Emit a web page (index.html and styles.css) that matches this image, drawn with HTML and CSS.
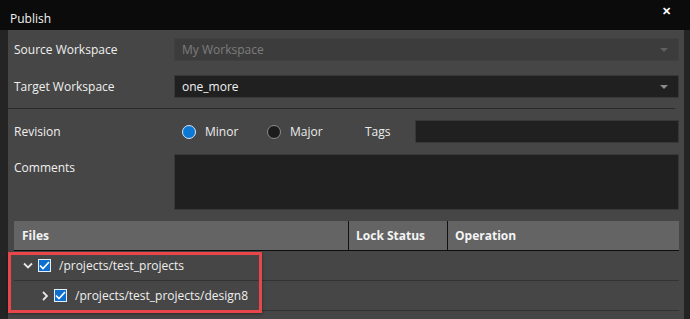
FILE: index.html
```html
<!DOCTYPE html>
<html lang="en">
<head>
    <meta charset="UTF-8">
    <title>Publish</title>
    <link rel="stylesheet" href="styles.css">
</head>
<body>
    <div class="dialog">
        <div class="titlebar">
            <span class="title">Publish</span>
            <span class="close">&#x2715;</span>
        </div>

        <div class="panel">
            <div class="form-row first">
                <label>Source Workspace</label>
                <div class="select disabled">
                    <span>My Workspace</span>
                    <span class="arrow"></span>
                </div>
            </div>

            <div class="form-row">
                <label>Target Workspace</label>
                <div class="select">
                    <span>one_more</span>
                    <span class="arrow"></span>
                </div>
            </div>

            <div class="divider"></div>

            <div class="form-row">
                <label>Revision</label>
                <div class="revision">
                    <span class="radio checked"></span>
                    <span class="radio-label">Minor</span>
                    <span class="radio"></span>
                    <span class="radio-label wide">Major</span>
                    <span class="tags-label">Tags</span>
                    <div class="input"></div>
                </div>
            </div>

            <div class="form-row comments">
                <label>Comments</label>
                <div class="textarea"></div>
            </div>

            <div class="table">
                <div class="thead">
                    <div class="th">Files</div>
                    <div class="th">Lock Status</div>
                    <div class="th">Operation</div>
                </div>
                <div class="tbody">
                    <div class="tr">
                        <div class="td file">
                            <svg class="chevron" width="10" height="7" viewBox="0 0 10 7"><path d="M1 1.5 L5 5.5 L9 1.5" fill="none" stroke="#e6e6e6" stroke-width="1.8"/></svg>
                            <span class="checkbox"><svg width="11" height="9" viewBox="0 0 11 9"><path d="M1 4.5 L4 7.5 L10 1" fill="none" stroke="#fff" stroke-width="1.6"/></svg></span>
                            <span>/projects/test_projects</span>
                        </div>
                        <div class="td"></div>
                        <div class="td"></div>
                    </div>
                    <div class="tr">
                        <div class="td file child">
                            <svg class="chevron" width="6" height="10" viewBox="0 0 6 10"><path d="M1 1 L5 5 L1 9" fill="none" stroke="#e6e6e6" stroke-width="1.8"/></svg>
                            <span class="checkbox"><svg width="11" height="9" viewBox="0 0 11 9"><path d="M1 4.5 L4 7.5 L10 1" fill="none" stroke="#fff" stroke-width="1.6"/></svg></span>
                            <span>/projects/test_projects/design8</span>
                        </div>
                        <div class="td"></div>
                        <div class="td"></div>
                    </div>
                    <div class="tr"></div>
                    <div class="highlight"></div>
                </div>
            </div>
        </div>
    </div>
</body>
</html>
```

FILE: styles.css
```css
body {
    margin: 0;
    background-color: #242424;
    font-family: "Open Sans", "Noto Sans", sans-serif;
    font-size: 12px;
    color: #ececec;
}
.dialog {
    width: 690px;
    height: 319px;
    overflow: hidden;
    display: flex;
    flex-direction: column;
}
.titlebar {
    height: 30px;
    flex-shrink: 0;
    background-color: #0b0b0b;
    display: flex;
    align-items: center;
    justify-content: space-between;
    padding: 0 19px 0 10px;
}
.title {
    margin-top: 6px;
    font-size: 12px;
    color: #f2f2f2;
}
.close {
    margin-top: -10px;
    font-size: 11px;
    font-weight: bold;
    color: #fff;
}
.panel {
    flex: 1;
    margin: 0 6px 0 8px;
    padding: 8px 5px 0 6px;
    background-color: #464646;
    display: flex;
    flex-direction: column;
}
.form-row {
    display: grid;
    grid-template-columns: 160px 1fr;
    align-items: center;
    margin-top: 14px;
}
.form-row.first {
    margin-top: 0;
}
.form-row label {
    color: #f0f0f0;
}
.select {
    height: 23px;
    box-sizing: border-box;
    background-color: #202020;
    border: 1px solid #383838;
    display: flex;
    align-items: center;
    justify-content: space-between;
    padding: 0 10px 0 7px;
    color: #f2f2f2;
}
.select.disabled {
    background-color: #3c3c3c;
    border-color: #404040;
    color: #7c7c7c;
}
.arrow {
    width: 0;
    height: 0;
    border-left: 4px solid transparent;
    border-right: 4px solid transparent;
    border-top: 4px solid #8a8a8a;
}
.select.disabled .arrow {
    border-top-color: #5e5e5e;
}
.divider {
    height: 1px;
    background-color: #2a2a2a;
    margin: 10px 4px 0 -6px;
}
.form-row.comments {
    align-items: start;
    margin-top: 11px;
}
.form-row.comments label {
    margin-top: 5px;
}
.divider + .form-row {
    margin-top: 11px;
}
.revision {
    display: flex;
    align-items: center;
}
.radio {
    width: 12px;
    height: 12px;
    border-radius: 50%;
    border: 1px solid #8c8c8c;
    background-color: #1c1c1c;
    margin-left: 8px;
}
.radio.checked {
    background-color: #0c78d6;
    border-color: #d6e6f5;
}
.radio-label {
    margin-left: 9px;
    width: 54px;
}
.radio-label.wide {
    width: 63px;
}
.tags-label {
    margin-left: 12px;
    width: 50px;
}
.input {
    flex: 1;
    height: 23px;
    box-sizing: border-box;
    background-color: #202020;
    border: 1px solid #383838;
}
.textarea {
    height: 56px;
    box-sizing: border-box;
    background-color: #202020;
    border: 1px solid #383838;
}
.table {
    margin-top: 11px;
}
.thead {
    display: grid;
    grid-template-columns: 334px 99px 1fr;
    height: 30px;
    box-sizing: border-box;
    background-color: #646464;
    border-bottom: 1px solid #0e0e0e;
}
.th {
    display: flex;
    align-items: center;
    padding-left: 7px;
    font-weight: bold;
    color: #f4f4f4;
    border-left: 1px solid #111;
}
.th:first-child {
    border-left: none;
    padding-left: 8px;
}
.tbody {
    position: relative;
}
.tr {
    display: grid;
    grid-template-columns: 334px 99px 1fr;
    height: 30px;
    box-sizing: border-box;
    border-bottom: 1px solid #333;
}
.td.file {
    display: flex;
    align-items: center;
    padding-left: 9px;
    color: #efefef;
}
.td.file.child {
    padding-left: 28px;
}
.chevron {
    margin-right: 5px;
}
.td.file.child .chevron {
    margin-right: 6px;
}
.checkbox {
    width: 13px;
    height: 13px;
    box-sizing: border-box;
    background-color: #0c6fd0;
    border: 1px solid #e6eef8;
    display: flex;
    align-items: center;
    justify-content: center;
    margin-right: 8px;
}
.highlight {
    position: absolute;
    left: -6px;
    top: 1px;
    width: 254px;
    height: 61px;
    box-sizing: border-box;
    border: 3px solid #e8464b;
    box-shadow: 0 1px 3px rgba(0,0,0,0.4);
}
```
